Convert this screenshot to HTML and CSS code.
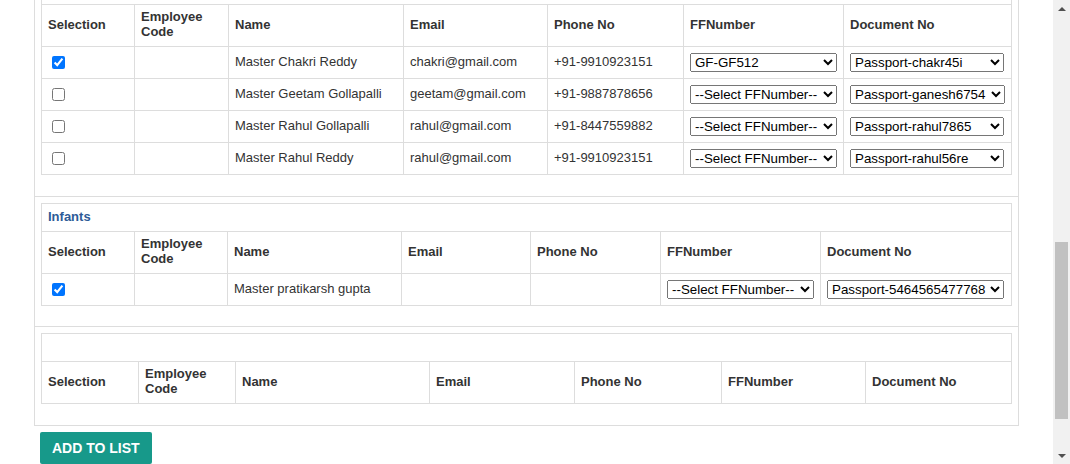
FILE: index.html
```html
<!DOCTYPE html>
<html lang="en">
<head>
<meta charset="utf-8">
<title>Passenger selection</title>
<link rel="stylesheet" href="styles.css">
</head>
<body>
<div class="viewport">
  <main class="page">
    <div class="panel">
      <section class="group">
        <table class="pax t-child">
          <colgroup><col><col><col><col><col><col><col></colgroup>
          <thead>
            <tr class="cap"><th colspan="7">&nbsp;</th></tr>
            <tr class="head first-head">
              <th>Selection</th><th>Employee Code</th><th>Name</th><th>Email</th><th>Phone No</th><th>FFNumber</th><th>Document No</th>
            </tr>
          </thead>
          <tbody>
            <tr>
              <td class="ctl"><input type="checkbox" checked></td>
              <td></td>
              <td>Master Chakri Reddy</td>
              <td>chakri@gmail.com</td>
              <td>+91-9910923151</td>
              <td class="ctl"><select class="sel-ff"><option>--Select FFNumber--</option><option selected>GF-GF512</option></select></td>
              <td class="ctl"><select class="sel-doc"><option>Passport-chakr45i</option></select></td>
            </tr>
            <tr>
              <td class="ctl"><input type="checkbox"></td>
              <td></td>
              <td>Master Geetam Gollapalli</td>
              <td>geetam@gmail.com</td>
              <td>+91-9887878656</td>
              <td class="ctl"><select class="sel-ff"><option selected>--Select FFNumber--</option><option>GF-GF512</option></select></td>
              <td class="ctl"><select class="sel-doc sel-doc-l"><option>Passport-ganesh6754</option></select></td>
            </tr>
            <tr>
              <td class="ctl"><input type="checkbox"></td>
              <td></td>
              <td>Master Rahul Gollapalli</td>
              <td>rahul@gmail.com</td>
              <td>+91-8447559882</td>
              <td class="ctl"><select class="sel-ff"><option selected>--Select FFNumber--</option><option>GF-GF512</option></select></td>
              <td class="ctl"><select class="sel-doc"><option>Passport-rahul7865</option></select></td>
            </tr>
            <tr>
              <td class="ctl"><input type="checkbox"></td>
              <td></td>
              <td>Master Rahul Reddy</td>
              <td>rahul@gmail.com</td>
              <td>+91-9910923151</td>
              <td class="ctl"><select class="sel-ff"><option selected>--Select FFNumber--</option><option>GF-GF512</option></select></td>
              <td class="ctl"><select class="sel-doc"><option>Passport-rahul56re</option></select></td>
            </tr>
          </tbody>
        </table>
      </section>

      <section class="group group-infants">
        <table class="pax t-infant">
          <colgroup><col><col><col><col><col><col><col></colgroup>
          <thead>
            <tr class="cap"><th colspan="7">Infants</th></tr>
            <tr class="head">
              <th>Selection</th><th>Employee Code</th><th>Name</th><th>Email</th><th>Phone No</th><th>FFNumber</th><th>Document No</th>
            </tr>
          </thead>
          <tbody>
            <tr>
              <td class="ctl"><input type="checkbox" checked></td>
              <td></td>
              <td>Master pratikarsh gupta</td>
              <td></td>
              <td></td>
              <td class="ctl"><select class="sel-ff"><option selected>--Select FFNumber--</option><option>GF-GF512</option></select></td>
              <td class="ctl"><select class="sel-doc sel-doc-xl"><option>Passport-5464565477768</option></select></td>
            </tr>
          </tbody>
        </table>
      </section>

      <section class="group">
        <table class="pax t-empty">
          <colgroup><col><col><col><col><col><col><col></colgroup>
          <thead>
            <tr class="cap"><th colspan="7">&nbsp;</th></tr>
            <tr class="head">
              <th>Selection</th><th>Employee Code</th><th>Name</th><th>Email</th><th>Phone No</th><th>FFNumber</th><th>Document No</th>
            </tr>
          </thead>
        </table>
      </section>
    </div>
    <div class="actions">
      <button type="button" class="btn-add">Add to list</button>
    </div>
  </main>

  <div class="scrollbar" aria-hidden="true">
    <div class="sb-btn">
      <svg width="8" height="4" viewBox="0 0 8 4"><polygon points="0,4 4,0 8,4" fill="#505050"/></svg>
    </div>
    <div class="sb-track"><div class="sb-thumb"></div></div>
    <div class="sb-btn">
      <svg width="8" height="4" viewBox="0 0 8 4"><polygon points="0,0 8,0 4,4" fill="#505050"/></svg>
    </div>
  </div>
</div>
<script src="script.js"></script>
</body>
</html>
```

FILE: styles.css
```css
* { box-sizing: border-box; }

html, body {
  margin: 0;
  height: 100%;
}

body {
  font-family: "Liberation Sans", Arial, sans-serif;
  font-size: 13px;
  color: #333;
  background: #fff;
  overflow: hidden;
}

.viewport {
  display: flex;
  height: 100vh;
}

.page {
  flex: 1;
  min-width: 0;
  overflow: hidden;
  padding: 0 34px;
}

.panel {
  border: 1px solid #ddd;
}

.group {
  padding: 6px 6px 21px;
}

.group + .group {
  border-top: 1px solid #ddd;
}

.group-infants {
  padding-bottom: 20px;
}

.pax {
  width: 100%;
  border-collapse: collapse;
  table-layout: fixed;
}

.pax th,
.pax td {
  border: 1px solid #ddd;
  padding: 5px 6px 7px;
  text-align: left;
  vertical-align: middle;
  line-height: 15px;
}

.pax td.ctl {
  padding: 6px;
}

.pax th {
  font-weight: bold;
}

.pax .head th {
  padding: 4px 6px 7px;
}

.pax .cap th {
  color: #2d5b97;
}

.pax select {
  height: 19px;
  margin: 0;
  font: 13.333px "Liberation Sans", Arial, sans-serif;
  color: #000;
  vertical-align: middle;
}

.sel-ff { width: 147px; }
.sel-doc { width: 154px; }
.sel-doc-l { width: 155px; }
.sel-doc-xl { width: 177px; }

.pax input[type="checkbox"] {
  display: block;
  width: 13px;
  height: 13px;
  margin: 0 0 0 4px;
}

/* column widths per table */
.t-child col:nth-child(1) { width: 93px; }
.t-child col:nth-child(2) { width: 94px; }
.t-child col:nth-child(3) { width: 175px; }
.t-child col:nth-child(4) { width: 144px; }
.t-child col:nth-child(5) { width: 136px; }
.t-child col:nth-child(6) { width: 160px; }

.t-infant col:nth-child(1) { width: 93px; }
.t-infant col:nth-child(2) { width: 93px; }
.t-infant col:nth-child(3) { width: 174px; }
.t-infant col:nth-child(4) { width: 129px; }
.t-infant col:nth-child(5) { width: 130px; }
.t-infant col:nth-child(6) { width: 160px; }

.t-empty col:nth-child(1) { width: 97px; }
.t-empty col:nth-child(2) { width: 97px; }
.t-empty col:nth-child(3) { width: 194px; }
.t-empty col:nth-child(4) { width: 145px; }
.t-empty col:nth-child(5) { width: 147px; }
.t-empty col:nth-child(6) { width: 144px; }

.actions {
  padding: 6px 6px 40px;
}

.btn-add {
  display: inline-block;
  margin: 0;
  padding: 6px 12px;
  border: 0;
  border-radius: 2px;
  background: #17998a;
  color: #fff;
  font: bold 14px/20px "Liberation Sans", Arial, sans-serif;
  text-transform: uppercase;
}

/* drawn window scrollbar */
.scrollbar {
  flex: none;
  width: 17px;
  background: #f1f1f1;
  display: flex;
  flex-direction: column;
}

.sb-btn {
  height: 17px;
  flex: none;
  display: flex;
  align-items: center;
  justify-content: center;
}

.sb-btn svg { display: block; }

.sb-track {
  flex: 1;
  padding: 0 2px;
}

.sb-thumb {
  margin-top: 225px;
  height: 177px;
  background: #c1c1c1;
}
```

FILE: script.js
```js
(function () {
  /* the page is shown scrolled so that the header row of the first
     passenger table sits 4px below the top of the window */
  var page = document.querySelector('.page');
  var head = document.querySelector('.first-head th');
  var offset = head.getBoundingClientRect().top - page.getBoundingClientRect().top;
  page.scrollTop = Math.floor(offset) - 4;
})();
```
